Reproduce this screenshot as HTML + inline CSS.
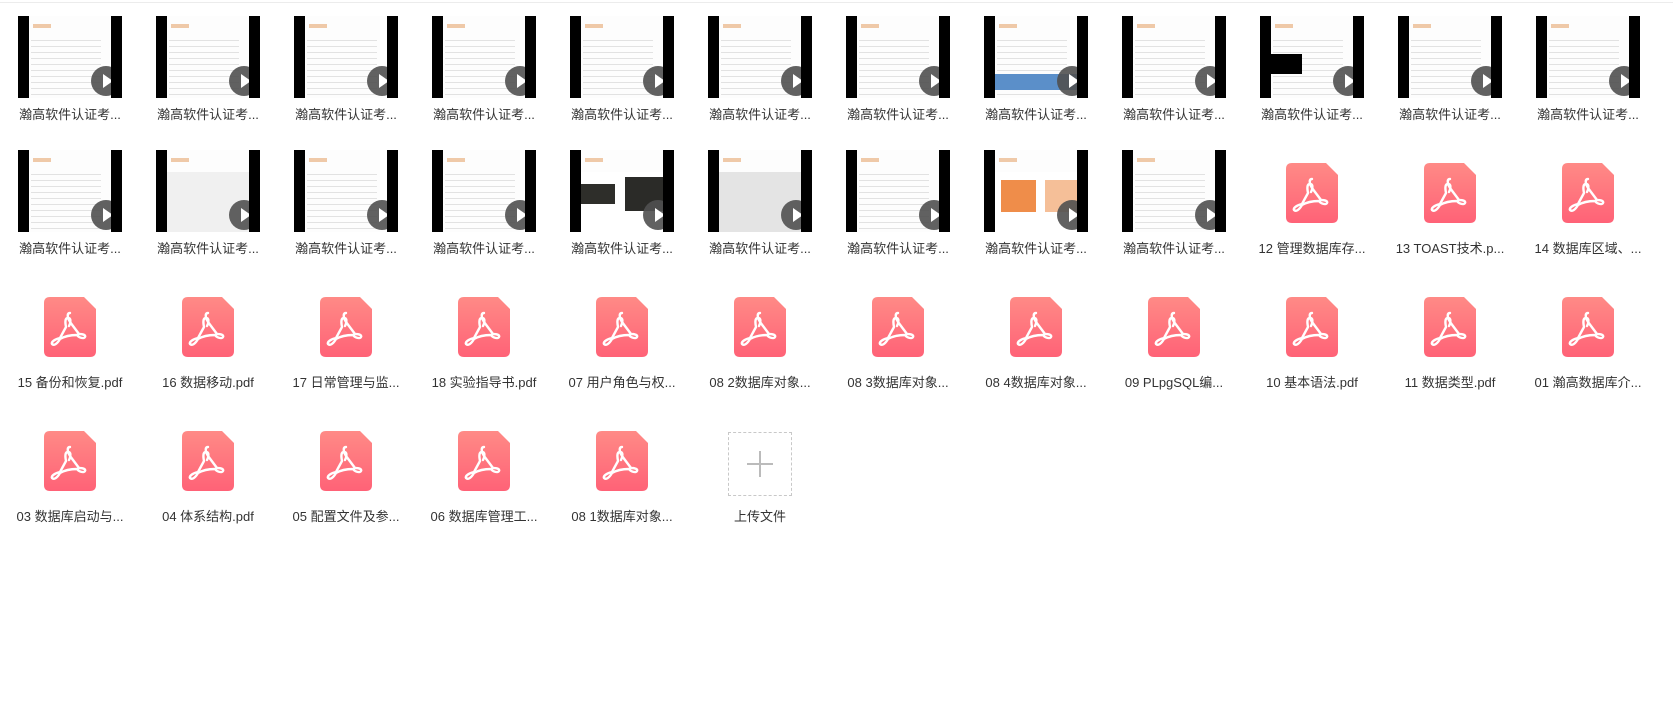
<!DOCTYPE html>
<html><head><meta charset="utf-8"><style>
body{margin:0;width:1673px;height:710px;background:#fff;position:relative;overflow:hidden;font-family:"Liberation Sans","Noto Sans CJK SC",sans-serif;}
.top{position:absolute;left:0;top:2px;width:1673px;height:1px;background:#ececec}
.it{position:absolute;width:104px;}
.th{position:absolute;left:0;top:0;width:104px;height:82px;background:#fff;overflow:hidden}
.pg{position:absolute;left:11px;top:0;width:82px;height:82px;background:#fdfdfd;
background-image:repeating-linear-gradient(180deg,transparent 0 4px,#e2e2e2 4px 5px,transparent 5px 6px);background-size:70px 6px;background-position:2px 20px;background-repeat:repeat-y}
.pg:before{content:"";position:absolute;left:0;top:0;width:82px;height:22px;background:#fdfdfd}
.pg:after{content:"";position:absolute;left:4px;top:8px;width:18px;height:4px;background:#efc9a8}
.bl{position:absolute;top:0;width:11px;height:82px;background:#000}
.pl{position:absolute;left:73px;top:50px;width:30px;height:30px;border-radius:50%;background:rgba(80,80,80,.9)}
.pl:after{content:"";position:absolute;left:12px;top:8px;border-left:10px solid #fff;border-top:7px solid transparent;border-bottom:7px solid transparent}
.lb{position:absolute;left:-10px;top:91px;width:124px;text-align:center;font-size:13px;color:#333;white-space:nowrap;line-height:16px}
.pdf{position:absolute;left:26px;top:13px;width:52px;height:60px}
.up{position:absolute;left:20px;top:14px;width:62px;height:62px;border:1px dashed #c8c8c8}
.up:before{content:"";position:absolute;left:18px;top:30px;width:26px;height:2px;background:#bbb}
.up:after{content:"";position:absolute;left:30px;top:18px;width:2px;height:26px;background:#bbb}
</style></head><body>
<div class="top"></div>
<svg width="0" height="0" style="position:absolute"><defs>
<linearGradient id="g" x1="0" y1="0" x2="0" y2="1"><stop offset="0" stop-color="#ff8a86"/><stop offset="1" stop-color="#ff6277"/></linearGradient>
<symbol id="p" viewBox="0 0 52 60"><path d="M6 0H40L52 12V54Q52 60 46 60H6Q0 60 0 54V6Q0 0 6 0Z" fill="url(#g)"/>
<path d="M26 16c-3 0-3 4 0 9l9 12c4 0 7 1 6 3c-1 2-6 1-8-2c-6 0-12 1-17 4c-3 5-6 7-8 5c-1-2 3-5 8-6l6-11c-1-5-1-9 2-9c3 0 3 4 1 8" fill="none" stroke="#fff" stroke-width="2.4" stroke-linecap="round" stroke-linejoin="round"/></symbol>
</defs></svg>

<!-- row 1 videos -->
<div class="it" style="left:18px;top:16px"><div class="th"><div class="pg"></div><div class="pl"></div><div class="bl" style="left:0"></div><div class="bl" style="right:0"></div></div><div class="lb">瀚高软件认证考...</div></div>
<div class="it" style="left:156px;top:16px"><div class="th"><div class="pg"></div><div class="pl"></div><div class="bl" style="left:0"></div><div class="bl" style="right:0"></div></div><div class="lb">瀚高软件认证考...</div></div>
<div class="it" style="left:294px;top:16px"><div class="th"><div class="pg"></div><div class="pl"></div><div class="bl" style="left:0"></div><div class="bl" style="right:0"></div></div><div class="lb">瀚高软件认证考...</div></div>
<div class="it" style="left:432px;top:16px"><div class="th"><div class="pg"></div><div class="pl"></div><div class="bl" style="left:0"></div><div class="bl" style="right:0"></div></div><div class="lb">瀚高软件认证考...</div></div>
<div class="it" style="left:570px;top:16px"><div class="th"><div class="pg"></div><div class="pl"></div><div class="bl" style="left:0"></div><div class="bl" style="right:0"></div></div><div class="lb">瀚高软件认证考...</div></div>
<div class="it" style="left:708px;top:16px"><div class="th"><div class="pg"></div><div class="pl"></div><div class="bl" style="left:0"></div><div class="bl" style="right:0"></div></div><div class="lb">瀚高软件认证考...</div></div>
<div class="it" style="left:846px;top:16px"><div class="th"><div class="pg"></div><div class="pl"></div><div class="bl" style="left:0"></div><div class="bl" style="right:0"></div></div><div class="lb">瀚高软件认证考...</div></div>
<div class="it" style="left:984px;top:16px"><div class="th"><div class="pg"></div><div style="position:absolute;left:11px;top:58px;width:82px;height:16px;background:#5b8fc9"></div><div class="pl"></div><div class="bl" style="left:0"></div><div class="bl" style="right:0"></div></div><div class="lb">瀚高软件认证考...</div></div>
<div class="it" style="left:1122px;top:16px"><div class="th"><div class="pg"></div><div class="pl"></div><div class="bl" style="left:0"></div><div class="bl" style="right:0"></div></div><div class="lb">瀚高软件认证考...</div></div>
<div class="it" style="left:1260px;top:16px"><div class="th"><div class="pg"></div><div style="position:absolute;left:0;top:38px;width:42px;height:20px;background:#000"></div><div class="pl"></div><div class="bl" style="left:0"></div><div class="bl" style="right:0"></div></div><div class="lb">瀚高软件认证考...</div></div>
<div class="it" style="left:1398px;top:16px"><div class="th"><div class="pg"></div><div class="pl"></div><div class="bl" style="left:0"></div><div class="bl" style="right:0"></div></div><div class="lb">瀚高软件认证考...</div></div>
<div class="it" style="left:1536px;top:16px"><div class="th"><div class="pg"></div><div class="pl"></div><div class="bl" style="left:0"></div><div class="bl" style="right:0"></div></div><div class="lb">瀚高软件认证考...</div></div>

<!-- row 2 -->
<div class="it" style="left:18px;top:150px"><div class="th"><div class="pg"></div><div class="pl"></div><div class="bl" style="left:0"></div><div class="bl" style="right:0"></div></div><div class="lb">瀚高软件认证考...</div></div>
<div class="it" style="left:156px;top:150px"><div class="th"><div class="pg" style="background:#f0f0f0"></div><div class="pl"></div><div class="bl" style="left:0"></div><div class="bl" style="right:0"></div></div><div class="lb">瀚高软件认证考...</div></div>
<div class="it" style="left:294px;top:150px"><div class="th"><div class="pg"></div><div class="pl"></div><div class="bl" style="left:0"></div><div class="bl" style="right:0"></div></div><div class="lb">瀚高软件认证考...</div></div>
<div class="it" style="left:432px;top:150px"><div class="th"><div class="pg"></div><div class="pl"></div><div class="bl" style="left:0"></div><div class="bl" style="right:0"></div></div><div class="lb">瀚高软件认证考...</div></div>
<div class="it" style="left:570px;top:150px"><div class="th"><div class="pg" style="background:#fff"></div><div style="position:absolute;left:11px;top:34px;width:34px;height:20px;background:#2e2e2a"></div><div style="position:absolute;left:55px;top:27px;width:38px;height:34px;background:#2b2b28"></div><div class="pl"></div><div class="bl" style="left:0"></div><div class="bl" style="right:0"></div></div><div class="lb">瀚高软件认证考...</div></div>
<div class="it" style="left:708px;top:150px"><div class="th"><div class="pg" style="background:#e4e4e4"></div><div class="pl"></div><div class="bl" style="left:0"></div><div class="bl" style="right:0"></div></div><div class="lb">瀚高软件认证考...</div></div>
<div class="it" style="left:846px;top:150px"><div class="th"><div class="pg"></div><div class="pl"></div><div class="bl" style="left:0"></div><div class="bl" style="right:0"></div></div><div class="lb">瀚高软件认证考...</div></div>
<div class="it" style="left:984px;top:150px"><div class="th"><div class="pg" style="background:#fff"></div><div style="position:absolute;left:17px;top:30px;width:35px;height:32px;background:#ef8d4a"></div><div style="position:absolute;left:61px;top:30px;width:32px;height:32px;background:#f5bf98"></div><div class="pl"></div><div class="bl" style="left:0"></div><div class="bl" style="right:0"></div></div><div class="lb">瀚高软件认证考...</div></div>
<div class="it" style="left:1122px;top:150px"><div class="th"><div class="pg"></div><div class="pl"></div><div class="bl" style="left:0"></div><div class="bl" style="right:0"></div></div><div class="lb">瀚高软件认证考...</div></div>
<div class="it" style="left:1260px;top:150px"><svg class="pdf"><use href="#p"/></svg><div class="lb">12 管理数据库存...</div></div>
<div class="it" style="left:1398px;top:150px"><svg class="pdf"><use href="#p"/></svg><div class="lb">13 TOAST技术.p...</div></div>
<div class="it" style="left:1536px;top:150px"><svg class="pdf"><use href="#p"/></svg><div class="lb">14 数据库区域、...</div></div>

<!-- row 3 -->
<div class="it" style="left:18px;top:284px"><svg class="pdf"><use href="#p"/></svg><div class="lb">15 备份和恢复.pdf</div></div>
<div class="it" style="left:156px;top:284px"><svg class="pdf"><use href="#p"/></svg><div class="lb">16 数据移动.pdf</div></div>
<div class="it" style="left:294px;top:284px"><svg class="pdf"><use href="#p"/></svg><div class="lb">17 日常管理与监...</div></div>
<div class="it" style="left:432px;top:284px"><svg class="pdf"><use href="#p"/></svg><div class="lb">18 实验指导书.pdf</div></div>
<div class="it" style="left:570px;top:284px"><svg class="pdf"><use href="#p"/></svg><div class="lb">07 用户角色与权...</div></div>
<div class="it" style="left:708px;top:284px"><svg class="pdf"><use href="#p"/></svg><div class="lb">08 2数据库对象...</div></div>
<div class="it" style="left:846px;top:284px"><svg class="pdf"><use href="#p"/></svg><div class="lb">08 3数据库对象...</div></div>
<div class="it" style="left:984px;top:284px"><svg class="pdf"><use href="#p"/></svg><div class="lb">08 4数据库对象...</div></div>
<div class="it" style="left:1122px;top:284px"><svg class="pdf"><use href="#p"/></svg><div class="lb">09 PLpgSQL编...</div></div>
<div class="it" style="left:1260px;top:284px"><svg class="pdf"><use href="#p"/></svg><div class="lb">10 基本语法.pdf</div></div>
<div class="it" style="left:1398px;top:284px"><svg class="pdf"><use href="#p"/></svg><div class="lb">11 数据类型.pdf</div></div>
<div class="it" style="left:1536px;top:284px"><svg class="pdf"><use href="#p"/></svg><div class="lb">01 瀚高数据库介...</div></div>

<!-- row 4 -->
<div class="it" style="left:18px;top:418px"><svg class="pdf"><use href="#p"/></svg><div class="lb">03 数据库启动与...</div></div>
<div class="it" style="left:156px;top:418px"><svg class="pdf"><use href="#p"/></svg><div class="lb">04 体系结构.pdf</div></div>
<div class="it" style="left:294px;top:418px"><svg class="pdf"><use href="#p"/></svg><div class="lb">05 配置文件及参...</div></div>
<div class="it" style="left:432px;top:418px"><svg class="pdf"><use href="#p"/></svg><div class="lb">06 数据库管理工...</div></div>
<div class="it" style="left:570px;top:418px"><svg class="pdf"><use href="#p"/></svg><div class="lb">08 1数据库对象...</div></div>
<div class="it" style="left:708px;top:418px"><div class="up"></div><div class="lb">上传文件</div></div>
</body></html>
